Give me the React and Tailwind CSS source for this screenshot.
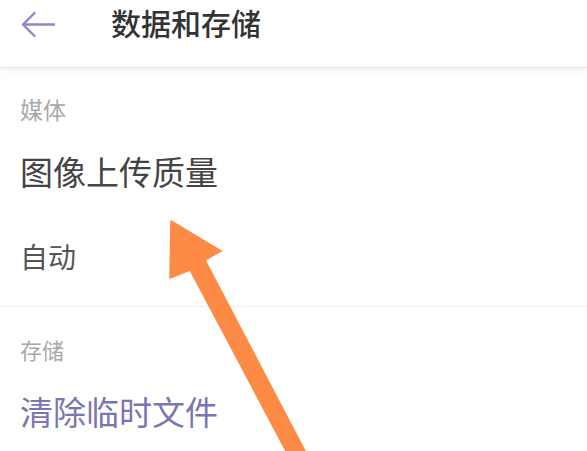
import React from 'react';

const cjk = { fontFamily: '"Noto Sans CJK SC", "Noto Sans", sans-serif' };

const BackIcon = () => (
  <svg width="36" height="28" viewBox="0 0 36 28" className="shrink-0">
    <path d="M34 13.5H3M14.5 2L3 13.5L14.5 25" fill="none" stroke="#8d88c6" strokeWidth="2.4" strokeLinecap="round" strokeLinejoin="round" />
  </svg>
);

// orange annotation arrow drawn over the page
const Pointer = () => (
  <svg className="absolute inset-0 pointer-events-none" width="587" height="451" viewBox="0 0 587 451">
    <polygon
      points="171,221 221,251 205,260 305,451 286,451 190,270 170,278"
      fill="#fd8b45"
      stroke="#fd8b45"
      strokeWidth="1.5"
      strokeLinejoin="round"
    />
  </svg>
);

export default function App() {
  return (
    <div className="relative w-full h-[451px] overflow-hidden bg-white" style={cjk}>
      {/* top bar */}
      <header className="h-[68px] flex items-start pt-[11px] border-b border-[#e4e4e4] shadow-[0_3px_5px_rgba(0,0,0,0.05)] bg-white">
        <div className="pl-[20px] flex items-center">
          <BackIcon />
        </div>
        <h1 className="ml-[55px] text-[30px] leading-[28px] font-medium text-[#333333] -mt-[3px]">数据和存储</h1>
      </header>

      {/* media */}
      <section className="px-[20px]">
        <div className="h-[85px] flex items-center text-[23px] text-[#a8a8a8] -mt-[1px]">媒体</div>
        <div className="pb-[32px]">
          <div className="h-[44px] leading-[44px] text-[33px] text-[#444444] -mt-[3px]">图像上传质量</div>
          <div className="mt-[43px] h-[41px] leading-[41px] text-[28px] text-[#555555] -mb-[3px]">自动</div>
        </div>
      </section>

      <div className="h-px bg-[#efefef]" />

      {/* storage */}
      <section className="px-[20px]">
        <div className="h-[87px] flex items-center text-[22px] text-[#a8a8a8] -mt-[1px]">存储</div>
        <div className="h-[40px] leading-[40px] text-[33px] text-[#7a76b2] -mt-[2px]">清除临时文件</div>
      </section>

      <Pointer />
    </div>
  );
}
